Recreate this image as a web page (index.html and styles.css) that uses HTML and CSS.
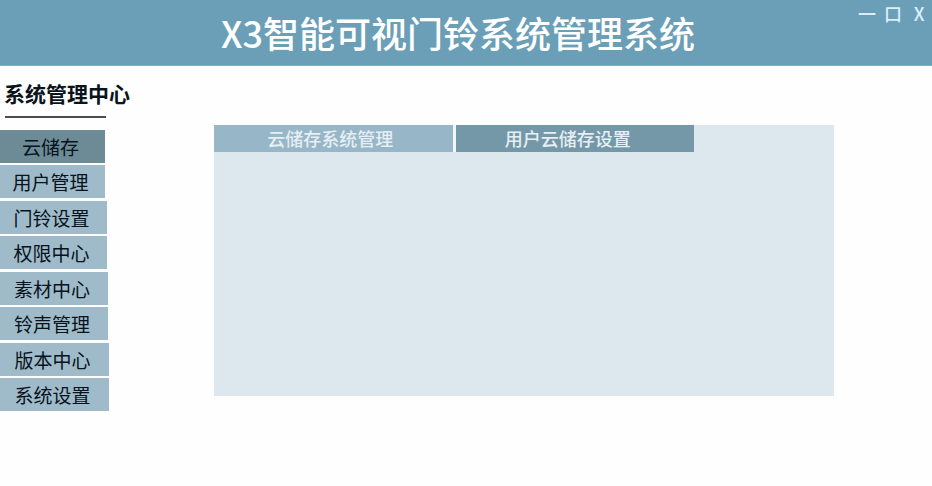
FILE: index.html
```html
<!DOCTYPE html>
<html lang="zh-CN">
<head>
<meta charset="utf-8">
<title>X3智能可视门铃系统管理系统</title>
<link rel="stylesheet" href="styles.css">
</head>
<body>
<header class="topbar">
  <h1 class="title">X3智能可视门铃系统管理系统</h1>
  <div class="window-controls">
    <button type="button">一</button>
    <button type="button">口</button>
    <button type="button">X</button>
  </div>
</header>
<div class="layout">
  <aside class="sidebar">
    <h2 class="sidebar-title">系统管理中心</h2>
    <nav class="menu">
      <div class="menu-group">
        <a class="menu-item active" href="#">云储存</a>
        <a class="menu-item" href="#">用户管理</a>
      </div>
      <div class="menu-group wide-1">
        <a class="menu-item" href="#">门铃设置</a>
        <a class="menu-item" href="#">权限中心</a>
      </div>
      <div class="menu-group wide-2">
        <a class="menu-item" href="#">素材中心</a>
        <a class="menu-item" href="#">铃声管理</a>
      </div>
      <div class="menu-group wide-3">
        <a class="menu-item" href="#">版本中心</a>
        <a class="menu-item" href="#">系统设置</a>
      </div>
    </nav>
  </aside>
  <main class="panel">
    <div class="tabs">
      <button type="button" class="tab">云储存系统管理</button>
      <button type="button" class="tab selected">用户云储存设置</button>
    </div>
  </main>
</div>
</body>
</html>
```
FILE: styles.css
```css
* {
  box-sizing: border-box;
}

body {
  margin: 0;
  background: #fefefe;
  color: #0a141c;
  font-family: "Noto Sans CJK SC", sans-serif;
}

button {
  margin: 0;
  padding: 0;
  border: 0;
  background: none;
  color: inherit;
  font: inherit;
}

.topbar {
  display: grid;
  grid-template-columns: 1fr auto 1fr;
  align-items: start;
  padding-right: 4px;
  background: #6b9fb7;
  border-bottom: 1px solid #83afc2;
  color: #fff;
}

.title {
  grid-column: 2;
  margin: 0 12px 0 0;
  font-size: 36px;
  font-weight: 500;
  line-height: 65px;
}

.window-controls {
  display: flex;
  justify-content: flex-end;
  gap: 8px;
  color: #d9f0fa;
  font-size: 18px;
  font-weight: 500;
  line-height: 26px;
}

.window-controls button {
  min-width: 18px;
}

.layout {
  display: grid;
  grid-template-columns: 214px 1fr;
  padding-right: 98px;
}

.sidebar-title {
  width: max-content;
  margin: 0 0 0 4px;
  padding-top: 12px;
  font-size: 21px;
  font-weight: 700;
  line-height: 30px;
}

.sidebar-title::after {
  display: block;
  width: 101px;
  height: 2px;
  margin: 8px 0 12px 1px;
  background: #4c4c4e;
  content: "";
}

.menu {
  display: flex;
  flex-direction: column;
  gap: 3px;
}

.menu-group {
  display: flex;
  flex-direction: column;
  gap: 2px;
  width: 105px;
}

.wide-1 {
  width: 107px;
}

.wide-2 {
  width: 108px;
}

.wide-3 {
  width: 109px;
}

.menu-item {
  padding-right: 4px;
  background: #9fbac8;
  color: #06121c;
  font-size: 19px;
  line-height: 33px;
  text-align: center;
  text-decoration: none;
}

.menu-item.active {
  background: #6c8b96;
}

.panel {
  min-height: 271px;
  margin-top: 59px;
  align-self: start;
  background: #dce8ee;
}

.tabs {
  display: grid;
  grid-template-columns: 1fr 1fr;
  gap: 3px;
  width: 480px;
  max-width: 100%;
  background: #f0f8fc;
}

.tab {
  padding-right: 6px;
  background: #97b6c8;
  color: #e6eff5;
  font-size: 18px;
  font-weight: 500;
  line-height: 27px;
}

.tab.selected {
  padding-right: 14px;
  background: #7598a9;
}
```
